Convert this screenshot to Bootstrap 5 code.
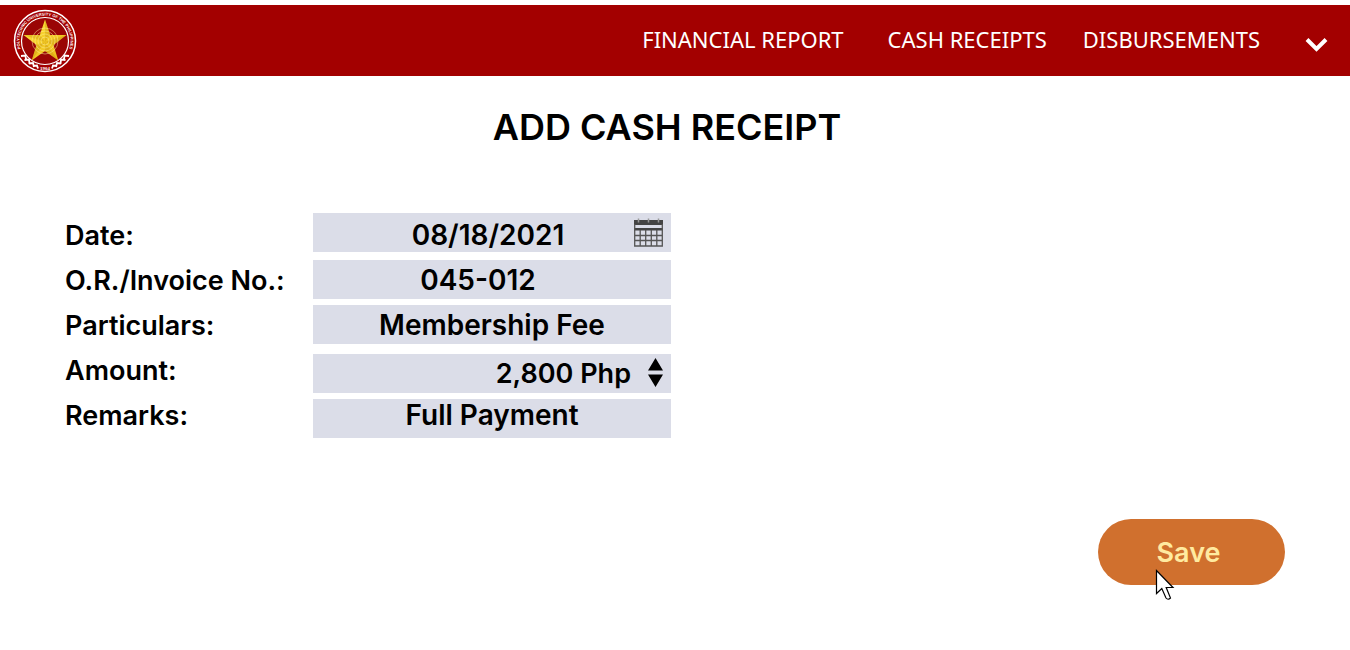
<!DOCTYPE html>
<html lang="en">
<head>
<meta charset="utf-8">
<meta name="viewport" content="width=device-width, initial-scale=1">
<title>Add Cash Receipt</title>
<link href="https://cdn.jsdelivr.net/npm/bootstrap@5.3.0/dist/css/bootstrap.min.css" rel="stylesheet">
<style>
  body { font-family: Inter, "Liberation Sans", sans-serif; color: #000; background: #fff; }
  .topbar { background: #a30000; margin-top: 5px; min-height: 71px; padding: 0 20px 0 12px; }
  .topbar a.menu-item { font-family: "Noto Sans", "Open Sans", sans-serif; font-size: 22px; line-height: 32px; padding-bottom: 4px; color: #fff; text-decoration: none; white-space: nowrap; }
  .menu { column-gap: 36px; }
  .menu-toggle { margin-left: 8px; padding: 8px 0 0; border: 0; background: none; line-height: 0; }
  .page-title { font-size: 36px; line-height: 44px; font-weight: 600; margin: 29px 0 64px; }
  .page-body { padding: 0 65px 48px; }
  .receipt { font-size: 28px; font-weight: 600; }
  .labels { width: 248px; font-size: 27px; }
  .labels label { line-height: 45px; white-space: nowrap; }
  .fields { width: 358px; max-width: 100%; }
  .field { height: 39px; background: #dbdde8; }
  .field + .field { margin-top: 6px; }
  .field.after-date { margin-top: 8px; }
  .field.amount { margin-top: 10px; }
  .field input { display: block; width: 100%; height: 39px; line-height: 30px; border: 0; border-radius: 0; background: none; color: #000; font-weight: 600; padding: 0; text-align: center; outline: 0; }
  .field.invoice input { padding-right: 28px; }
  .field.amount input { font-size: 27px; text-align: right; padding-right: 40px; }
  .field button { position: absolute; top: 4px; right: 8px; border: 0; padding: 0; background: none; line-height: 0; }
  .save-area { margin-top: 81px; }
  .save { display: block; width: 187px; height: 66px; border: 0; padding: 2px 6px 0 0; background: #d0702e; color: #ffeaa0; font-size: 27px; font-weight: 600; }
  .pointer { position: absolute; left: 57px; top: 50px; pointer-events: none; }
</style>
</head>
<body>
<nav class="topbar d-flex align-items-center justify-content-between" aria-label="Main">
  <a href="#" class="d-block lh-1" aria-label="Home">
    <svg class="d-block" width="66" height="66" viewBox="0 0 66 66">
      <defs>
        <path id="ring" d="M14 50 A25.500 25.500 0 1 1 52 50"/>
        <linearGradient id="gold" x1="0" y1="0" x2="1" y2="1">
          <stop offset="0" stop-color="#ffe23a"/><stop offset="1" stop-color="#e9b716"/>
        </linearGradient>
      </defs>
      <circle cx="33" cy="33" r="30.500" fill="#a30000" stroke="#fff" stroke-width="1.500"/>
      <circle cx="33" cy="33" r="23.500" fill="#9a0505" stroke="#fff" stroke-width="1.200"/>
      <text text-anchor="middle" font-family="Liberation Sans, sans-serif" font-size="4" font-weight="700" fill="#fff"><textPath href="#ring" startOffset="50%">POLYTECHNIC UNIVERSITY OF THE PHILIPPINES</textPath></text>
      <text x="33" y="62" text-anchor="middle" font-family="Liberation Serif, serif" font-size="5" font-weight="700" fill="#fff">1904</text>
      <g fill="none" stroke="#fff" stroke-width="1.800">
        <path d="M9 48l4.500-.5.500 4.500M12.500 52l4.500-.5.500 4.500M17 55.500l4-.5 1 4M21.500 58l3.500-.5 1 3M57 48l-4.500-.5-.5 4.500M53.500 52l-4.500-.5-.5 4.500M49 55.500l-4-.5-1 4M44.500 58l-3.500-.5-1 3"/>
      </g>
      <path d="M33 11.500l5.200 15.400 16.300.2-13 9.800 4.800 15.600L33 43.100l-13.300 9.400 4.800-15.600-13-9.800 16.300-.2z" fill="url(#gold)"/>
      <path d="M33 34V11.500l5.200 15.400zM33 34l21.500-6.900-13 9.800zM33 34l13.300 18.500L33 43.100zM33 34L19.700 52.500l4.800-15.600zM33 34L11.500 27.100l16.300-.2z" fill="#b98208" opacity=".3"/>
      <g fill="none" stroke="#ffef9a" stroke-width="1" opacity=".5">
        <circle cx="33" cy="33" r="4"/><circle cx="33" cy="33" r="7"/><circle cx="33" cy="33" r="10"/><circle cx="33" cy="33" r="13"/>
      </g>
    </svg>
  </a>
  <div class="menu d-flex align-items-center">
    <a href="#" class="menu-item me-2">FINANCIAL REPORT</a>
    <a href="#" class="menu-item">CASH RECEIPTS</a>
    <a href="#" class="menu-item">DISBURSEMENTS</a>
    <button type="button" class="menu-toggle" aria-label="More">
      <svg width="26" height="16" viewBox="0 0 26 16"><path d="M3 2.500l9.500 9.500 9.500-9.500" fill="none" stroke="#fff" stroke-width="4"/></svg>
    </button>
  </div>
</nav>

<main>
  <h1 class="page-title text-center pe-3">ADD CASH RECEIPT</h1>
  <form class="page-body receipt">
    <div class="d-flex">
      <div class="labels d-flex flex-column flex-shrink-0">
        <label for="date">Date:</label>
        <label for="invoice">O.R./Invoice No.:</label>
        <label for="particulars">Particulars:</label>
        <label for="amount">Amount:</label>
        <label for="remarks">Remarks:</label>
      </div>
      <div class="fields">
        <div class="field position-relative">
          <input id="date" class="pt-1 pe-2" type="text" value="08/18/2021">
          <button type="button" aria-label="Pick a date">
            <svg width="29" height="30" viewBox="0 0 29 30">
              <path fill="#444" d="M0 3h29v5H0zM0 11h29v2.500H0z"/>
              <path fill="none" stroke="#555" stroke-width="1.300" d="M.7 7v22h27.600V7M.7 18.500h27.600M.7 23.500h27.600M6.200 13v16M11.700 13v16M17.300 13v16M22.800 13v16"/>
              <path stroke="#999" stroke-width="1.500" d="M4.500 1.500v4M14.500 1.500v4M24.500 1.500v4"/>
            </svg>
          </button>
        </div>
        <div class="field invoice after-date">
          <input id="invoice" type="text" value="045-012">
        </div>
        <div class="field">
          <input id="particulars" type="text" value="Membership Fee">
        </div>
        <div class="field amount position-relative">
          <input id="amount" type="text" value="2,800 Php">
          <button type="button" aria-label="Change amount">
            <svg width="15" height="29" viewBox="0 0 15 29"><path d="M7.500 0L15 12.500H0zM7.500 29L15 16.500H0z"/></svg>
          </button>
        </div>
        <div class="field">
          <input id="remarks" class="pb-2" type="text" value="Full Payment">
        </div>
      </div>
    </div>
    <div class="save-area d-flex justify-content-end">
      <div class="position-relative">
        <button type="button" class="save rounded-pill">Save</button>
        <svg class="pointer" width="20" height="32" viewBox="0 0 20 32">
          <path d="M1.500 1.500v23l5.300-5 4.200 9.500q2 2.500 4.500 0l-4.300-10.500h6.800z" fill="#fff" stroke="#000" stroke-width="1.200"/>
        </svg>
      </div>
    </div>
  </form>
</main>
<script src="https://cdn.jsdelivr.net/npm/bootstrap@5.3.0/dist/js/bootstrap.bundle.min.js"></script>
</body>
</html>
